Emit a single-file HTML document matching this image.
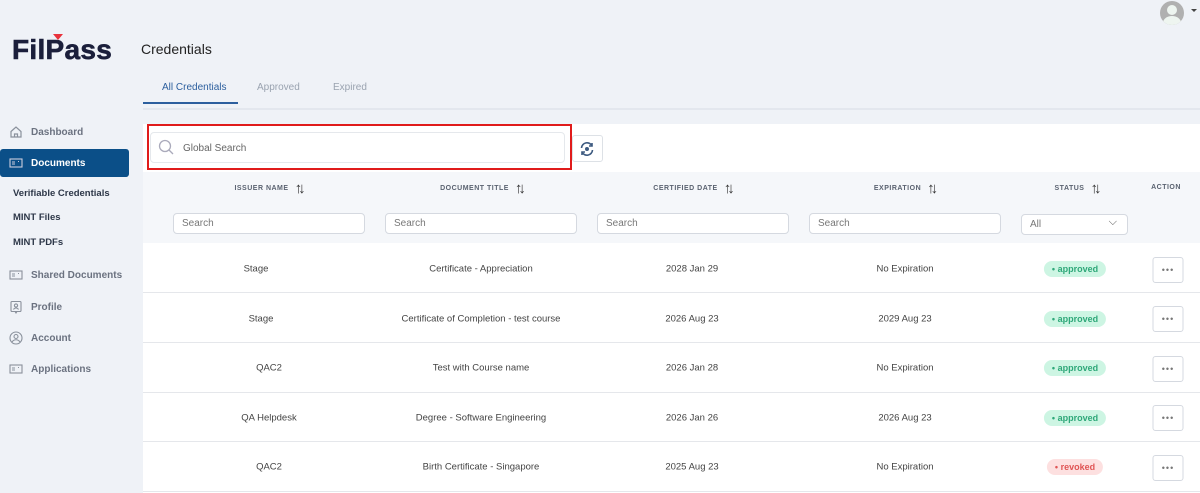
<!DOCTYPE html><html><head><meta charset="utf-8"><style>
*{box-sizing:border-box;margin:0;padding:0}
body{width:1200px;height:493px;overflow:hidden;background:#eff2f7;font-family:"Liberation Sans",sans-serif;position:relative;color:#333}
.a{position:absolute}
.logo{left:12px;top:34px;font-size:28px;font-weight:bold;color:#1b1f3b;letter-spacing:0.3px;-webkit-text-stroke:0.6px #1b1f3b}
.nav{left:9px;font-size:10px;font-weight:bold;color:#6b7280;display:flex;align-items:center;gap:8px}
.nav svg{width:14px;height:14px}
.sub{left:13px;font-size:9.5px;font-weight:bold;color:#2d3748}
.tab{top:82px;font-size:10px;color:#9aa3b0}
.panel{left:143px;top:124px;width:1057px;height:369px;background:#fff}
.hdr{left:143px;top:172px;width:1057px;height:71px;background:#f5f7fa}
.th{top:180px;font-size:7px;font-weight:bold;color:#5a6270;letter-spacing:.5px;display:flex;align-items:center;gap:6px;transform:translateX(-50%)}
.th span.ar{font-size:15px;color:#333;font-weight:normal;letter-spacing:-4px}
.in{top:213px;height:21px;border:1px solid #d5d9e0;border-radius:4px;background:#fff;font-size:10px;color:#777;padding:4px 8px;width:192px}
.row{left:143px;width:1057px;height:50px;border-bottom:1px solid #e5e7eb}
.c{font-size:9.5px;color:#444;transform:translate(-50%,-50%);white-space:nowrap}
.bd{font-size:9px;font-weight:bold;padding:3px 8px;border-radius:10px;transform:translate(-50%,-50%)}
.ap{background:#cdf5e3;color:#2ea879}
.rv{background:#fde0e0;color:#e05555}
.dots{width:31px;height:26px;border:1px solid #d5d9e0;border-radius:3px;background:#fff;transform:translate(-50%,-50%);text-align:center;font-size:9px;line-height:24px;color:#777;letter-spacing:1px}
</style></head><body>
<div class="a" style="left:1160px;top:1px;width:24px;height:24px;border-radius:50%;background:#b0b0b0;overflow:hidden"><div class="a" style="left:7px;top:4px;width:10px;height:10px;border-radius:50%;background:#eef5f0"></div><div class="a" style="left:3px;top:15px;width:18px;height:14px;border-radius:50%;background:#eef5f0"></div></div>
<div class="a" style="left:1191px;top:9px;border:3px solid transparent;border-top:3px solid #444"></div>
<div class="a logo">FilPass</div>
<div class="a" style="left:53px;top:34px;border:4px solid transparent;border-top:6px solid #e8323c;border-left-width:5px;border-right-width:5px"></div>
<div class="a" style="left:141px;top:41px;font-size:14px;color:#222">Credentials</div>
<div class="a tab" style="left:162px;color:#2c5f9e">All Credentials</div>
<div class="a tab" style="left:257px">Approved</div>
<div class="a tab" style="left:333px">Expired</div>
<div class="a" style="left:143px;top:102px;width:95px;height:2px;background:#2c5f9e"></div>
<div class="a" style="left:143px;top:108px;width:1057px;height:2px;background:#e3e7ee"></div>

<div class="a nav" style="top:125px"><svg viewBox="0 0 14 14" fill="none" stroke="#8a919c" stroke-width="1.2"><path d="M2 6.5L7 2l5 4.5V12H2z"/><path d="M5.5 12V9h3v3"/></svg>Dashboard</div>
<div class="a" style="left:0;top:149px;width:129px;height:28px;background:#0b4f88;border-radius:3px"></div>
<div class="a nav" style="top:156px;color:#fff"><svg viewBox="0 0 14 14" fill="none" stroke="#ccd" stroke-width="1.1"><rect x="1" y="3" width="12" height="8"/><path d="M3 6h3M3 8h3M9 5.5h1"/></svg>Documents</div>
<div class="a sub" style="top:188px">Verifiable Credentials</div>
<div class="a sub" style="top:212px">MINT Files</div>
<div class="a sub" style="top:237px">MINT PDFs</div>
<div class="a nav" style="top:268px"><svg viewBox="0 0 14 14" fill="none" stroke="#8a919c" stroke-width="1.1"><rect x="1" y="3" width="12" height="8"/><path d="M3 6h3M3 8h3M9 5.5h1"/></svg>Shared Documents</div>
<div class="a nav" style="top:300px"><svg viewBox="0 0 14 14" fill="none" stroke="#8a919c" stroke-width="1.1"><rect x="2" y="1.5" width="10" height="10" rx="1"/><circle cx="7" cy="5.5" r="1.6"/><path d="M4.5 9.5c1-2 4-2 5 0M6 11.5l1 1.5 1-1.5"/></svg>Profile</div>
<div class="a nav" style="top:331px"><svg viewBox="0 0 14 14" fill="none" stroke="#8a919c" stroke-width="1.1"><circle cx="7" cy="7" r="6"/><circle cx="7" cy="5.5" r="2"/><path d="M3 11c2-3 6-3 8 0"/></svg>Account</div>
<div class="a nav" style="top:362px"><svg viewBox="0 0 14 14" fill="none" stroke="#8a919c" stroke-width="1.1"><rect x="1" y="3" width="12" height="8"/><path d="M3 6h3M3 8h3M9 5.5h1"/></svg>Applications</div>

<div class="a panel"></div>
<div class="a" style="left:147px;top:124px;width:425px;height:46px;border:2px solid #e01b1b"></div>
<div class="a" style="left:150px;top:132px;width:415px;height:31px;border:1px solid #e5e8ec;border-radius:4px;background:#fff"></div>
<svg class="a" style="left:158px;top:139px" width="16" height="16" viewBox="0 0 16 16" fill="none" stroke="#aab" stroke-width="1.3"><circle cx="7" cy="7" r="5.5"/><path d="M11 11l4 4"/></svg>
<div class="a" style="left:183px;top:143px;font-size:10px;color:#666">Global Search</div>
<div class="a" style="left:572px;top:135px;width:31px;height:27px;border:1px solid #dde1e6;border-radius:3px"></div>
<svg class="a" style="left:579px;top:141px" width="16" height="16" viewBox="0 0 16 16" fill="none" stroke="#3d5a80" stroke-width="1.6"><path d="M2.5 7A5.5 5.5 0 0 1 13 5M13.5 9A5.5 5.5 0 0 1 3 11"/><path d="M13 2v3h-3M3 14v-3h3"/><circle cx="8" cy="8" r="1.2" fill="#3d5a80"/></svg>

<div class="a hdr"></div>
<div class="a th" style="left:268px">ISSUER NAME <span class="ar">↑↓</span></div>
<div class="a th" style="left:481px">DOCUMENT TITLE <span class="ar">↑↓</span></div>
<div class="a th" style="left:692px">CERTIFIED DATE <span class="ar">↑↓</span></div>
<div class="a th" style="left:904px">EXPIRATION <span class="ar">↑↓</span></div>
<div class="a th" style="left:1076px">STATUS <span class="ar">↑↓</span></div>
<div class="a th" style="left:1166px;top:184px">ACTION</div>
<div class="a in" style="left:173px">Search</div>
<div class="a in" style="left:385px">Search</div>
<div class="a in" style="left:597px">Search</div>
<div class="a in" style="left:809px">Search</div>
<div class="a in" style="left:1021px;width:107px;top:214px">All<span style="position:absolute;right:10px;top:1px;font-size:11px;color:#555">⌵</span></div>

<div class="a row" style="top:243px"></div><div class="a row" style="top:293px"></div><div class="a row" style="top:343px"></div><div class="a row" style="top:392px"></div><div class="a row" style="top:442px"></div>

<div class="a c" style="left:256px;top:269px">Stage</div><div class="a c" style="left:481px;top:269px">Certificate - Appreciation</div><div class="a c" style="left:692px;top:269px">2028 Jan 29</div><div class="a c" style="left:905px;top:269px">No Expiration</div><div class="a bd ap" style="left:1075px;top:269px">• approved</div><div class="a dots" style="left:1168px;top:270px">•••</div>
<div class="a c" style="left:261px;top:319px">Stage</div><div class="a c" style="left:481px;top:319px">Certificate of Completion - test course</div><div class="a c" style="left:692px;top:319px">2026 Aug 23</div><div class="a c" style="left:905px;top:319px">2029 Aug 23</div><div class="a bd ap" style="left:1075px;top:319px">• approved</div><div class="a dots" style="left:1168px;top:319px">•••</div>
<div class="a c" style="left:269px;top:368px">QAC2</div><div class="a c" style="left:481px;top:368px">Test with Course name</div><div class="a c" style="left:692px;top:368px">2026 Jan 28</div><div class="a c" style="left:905px;top:368px">No Expiration</div><div class="a bd ap" style="left:1075px;top:368px">• approved</div><div class="a dots" style="left:1168px;top:369px">•••</div>
<div class="a c" style="left:269px;top:418px">QA Helpdesk</div><div class="a c" style="left:481px;top:418px">Degree - Software Engineering</div><div class="a c" style="left:692px;top:418px">2026 Jan 26</div><div class="a c" style="left:905px;top:418px">2026 Aug 23</div><div class="a bd ap" style="left:1075px;top:418px">• approved</div><div class="a dots" style="left:1168px;top:418px">•••</div>
<div class="a c" style="left:269px;top:467px">QAC2</div><div class="a c" style="left:481px;top:467px">Birth Certificate - Singapore</div><div class="a c" style="left:692px;top:467px">2025 Aug 23</div><div class="a c" style="left:905px;top:467px">No Expiration</div><div class="a bd rv" style="left:1075px;top:467px">• revoked</div><div class="a dots" style="left:1168px;top:468px">•••</div>
</body></html>
